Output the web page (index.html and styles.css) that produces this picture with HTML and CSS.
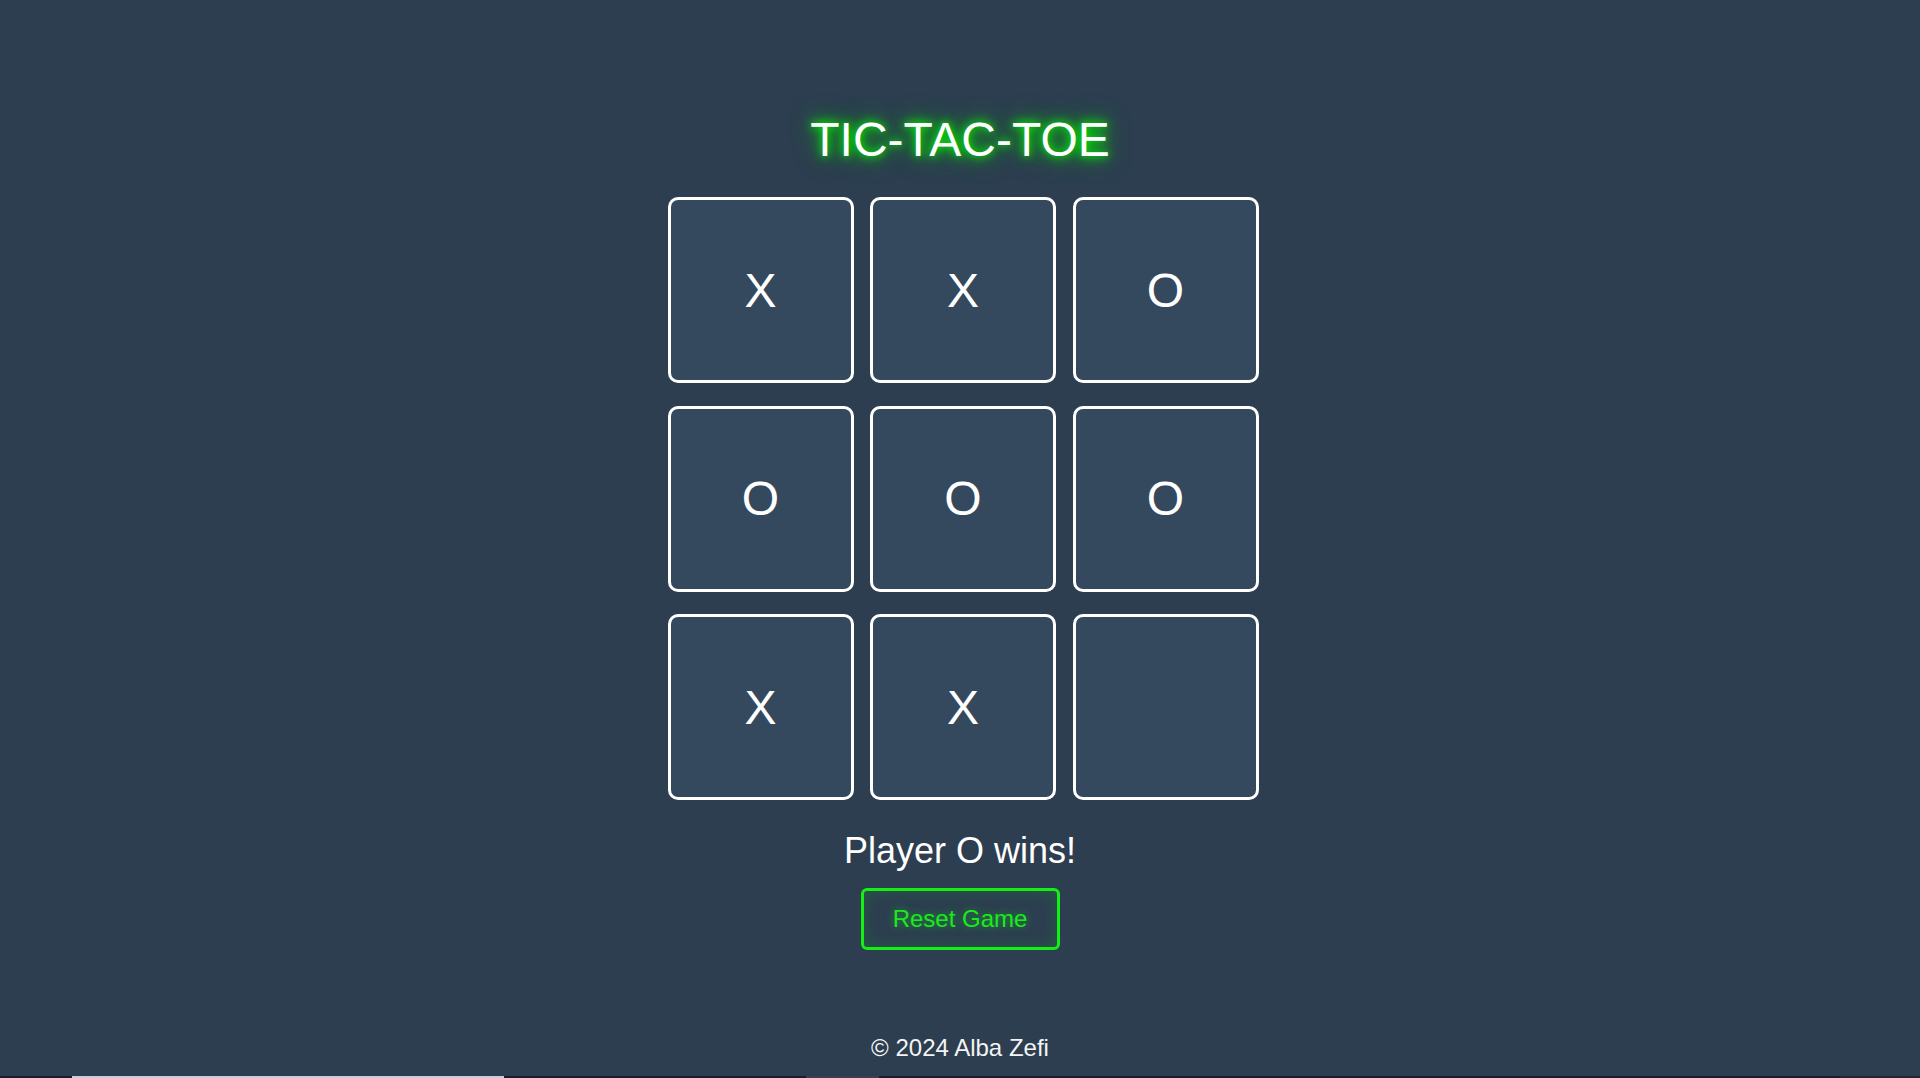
FILE: index.html
```html
<!DOCTYPE html>
<html lang="en">
<head>
<meta charset="utf-8">
<title>Tic-Tac-Toe</title>
<link rel="stylesheet" href="styles.css">
</head>
<body>
<div class="page">
  <main class="game">
    <h1 class="title">TIC-TAC-TOE</h1>
    <div class="board">
      <div class="cell">X</div>
      <div class="cell">X</div>
      <div class="cell">O</div>
      <div class="cell">O</div>
      <div class="cell">O</div>
      <div class="cell">O</div>
      <div class="cell">X</div>
      <div class="cell">X</div>
      <div class="cell"></div>
    </div>
    <p class="status">Player O wins!</p>
    <button class="reset">Reset Game</button>
  </main>
  <footer class="footer">© 2024 Alba Zefi</footer>
  <div class="taskbar">
    <span class="tb-gap1"></span>
    <span class="tb-light"></span>
    <span class="tb-gap2"></span>
    <span class="tb-grey"></span>
    <span class="tb-gap3"></span>
    <span class="tb-end"></span>
  </div>
</div>
</body>
</html>
```
FILE: styles.css
```css
html, body {
  margin: 0;
  padding: 0;
}
body {
  background: #2c3e50;
  font-family: "Liberation Sans", Arial, sans-serif;
  color: #ffffff;
}
.page {
  height: 1078px;
  display: flex;
  flex-direction: column;
  align-items: stretch;
  overflow: hidden;
}
.game {
  display: flex;
  flex-direction: column;
  align-items: center;
}
.title {
  margin: 112px 0 0;
  font-size: 48px;
  line-height: 55px;
  font-weight: normal;
  color: #ffffff;
  text-shadow: 0 0 8px #00ff00, 0 0 16px #00d000, 0 0 26px rgba(0, 200, 0, 0.7);
}
.board {
  margin: 30px 0 0 6px;
  display: grid;
  grid-template-columns: repeat(3, 186px);
  grid-template-rows: repeat(3, 186px);
  column-gap: 16.5px;
  row-gap: 22.5px;
}
.cell {
  box-sizing: border-box;
  width: 186px;
  height: 186px;
  border: 3px solid #ffffff;
  border-radius: 10px;
  background: #34495e;
  display: flex;
  align-items: center;
  justify-content: center;
  font-size: 48px;
  color: #ffffff;
}
.status {
  margin: 30px 0 0;
  font-size: 36px;
  line-height: 41px;
  color: #ffffff;
}
.reset {
  margin-top: 17px;
  box-sizing: border-box;
  width: 199px;
  height: 62px;
  padding: 0;
  background: transparent;
  border: 3px solid #14f014;
  border-radius: 6px;
  color: #1ee81e;
  font-family: "Liberation Sans", Arial, sans-serif;
  font-size: 24px;
  text-shadow: 0 0 8px rgba(0, 255, 0, 0.5);
  box-shadow: inset 0 0 16px rgba(0, 255, 0, 0.16);
  cursor: pointer;
}
.footer {
  margin-top: 84px;
  text-align: center;
  font-size: 24px;
  line-height: 28px;
  color: #f4f4f4;
}
.taskbar {
  margin-top: auto;
  height: 2px;
  display: flex;
  background: #1a1f27;
}
.tb-gap1 { width: 72px; }
.tb-light { width: 432px; background: #c9ced6; }
.tb-gap2 { width: 302px; }
.tb-grey { width: 73px; background: #3b4049; }
.tb-gap3 { width: 961px; }
.tb-end { flex: 1; background: #23282f; }
```
